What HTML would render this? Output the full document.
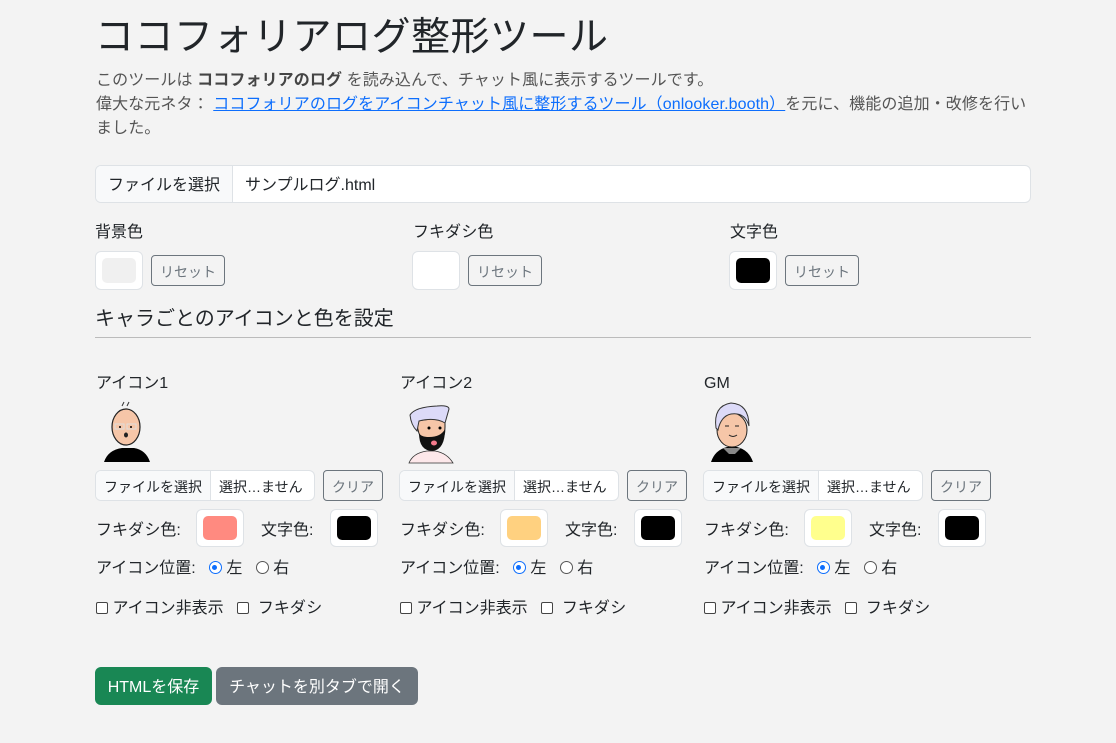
<!DOCTYPE html>
<html><head><meta charset="utf-8"><style>
*{box-sizing:border-box;margin:0;padding:0}
body{width:1116px;height:743px;background:#f3f3f3;font-family:"Liberation Sans","Noto Sans CJK JP",sans-serif;color:#212529;position:relative;overflow:hidden;font-size:16px;line-height:24px}
.a{position:absolute;white-space:nowrap}
h1{position:absolute;left:95px;top:10px;font-size:39px;font-weight:400;line-height:56px;letter-spacing:0.5px}
.p{position:absolute;left:96px;font-size:16px;color:#555;line-height:24px;letter-spacing:0.1px}
.p b{color:#444}
.p a{color:#0d6efd;text-decoration:underline}
.fi{position:absolute;border:1px solid #dee2e6;border-radius:6px;background:#fff;display:flex;font-size:16px;overflow:hidden}
.fi span.b{background:#f8f9fa;border-right:1px solid #dee2e6;display:flex;align-items:center;padding:3px 12px 0}
.fi span.t{display:flex;align-items:center;padding:3px 12px 0}
.cb{position:absolute;border:1px solid #dee2e6;border-radius:6px;background:#fff;padding:6px}
.cb div{width:100%;height:100%;border-radius:5px}
.btn{position:absolute;border:1px solid #6c757d;border-radius:4px;color:#6c757d;font-size:14px;display:flex;align-items:center;justify-content:center;padding-top:2px}
.rad{display:inline-block;width:13px;height:13px;border-radius:50%;border:1px solid #555;vertical-align:-1px;background:#fff}
.rad.on{border:1.5px solid #0d6efd;position:relative}
.rad.on:after{content:"";position:absolute;left:2.5px;top:2.5px;width:5px;height:5px;border-radius:50%;background:#0d6efd}
.chk{display:inline-block;width:12px;height:12px;border:1px solid #444;border-radius:2px;background:#fff;vertical-align:-1px}
.sb{position:absolute;top:667px;height:38px;border-radius:6px;color:#fff;font-size:16px;display:flex;align-items:center;justify-content:center;padding-top:3px}
</style></head><body>
<h1>ココフォリアログ整形ツール</h1>
<div class="p" style="top:69px">このツールは <b>ココフォリアのログ</b> を読み込んで、チャット風に表示するツールです。</div>
<div class="p" style="top:93px">偉大な元ネタ： <a>ココフォリアのログをアイコンチャット風に整形するツール（onlooker.booth）</a>を元に、機能の追加・改修を行い</div>
<div class="p" style="top:117px">ました。</div>

<div class="fi" style="left:95px;top:165px;width:936px;height:38px"><span class="b">ファイルを選択</span><span class="t">サンプルログ.html</span></div>

<div class="a" style="left:95px;top:221px">背景色</div>
<div class="cb" style="left:95px;top:251px;width:48px;height:39px"><div style="background:#f0f0f0"></div></div>
<div class="btn" style="left:151px;top:255px;width:74px;height:31px">リセット</div>
<div class="a" style="left:413px;top:221px">フキダシ色</div>
<div class="cb" style="left:412px;top:251px;width:48px;height:39px"><div style="background:#fff"></div></div>
<div class="btn" style="left:468px;top:255px;width:74px;height:31px">リセット</div>
<div class="a" style="left:730px;top:221px">文字色</div>
<div class="cb" style="left:729px;top:251px;width:48px;height:39px"><div style="background:#000"></div></div>
<div class="btn" style="left:785px;top:255px;width:74px;height:31px">リセット</div>

<div class="a" style="left:95px;top:306px;font-size:20px;line-height:26px">キャラごとのアイコンと色を設定</div>
<div class="a" style="left:95px;top:337px;width:936px;height:1px;background:#bbb"></div>

<div class="a" style="left:96px;top:372px">アイコン1</div>
<div class="a" style="left:400px;top:372px">アイコン2</div>
<div class="a" style="left:704px;top:372px">GM</div>

<svg class="a" style="left:100px;top:400px" width="52" height="64" viewBox="0 0 52 64">
<path d="M4 62 Q8 50 22 48 L34 48 Q46 50 50 62 Z" fill="#000"/>
<ellipse cx="26" cy="27" rx="14" ry="18" fill="#f6c6a8" stroke="#222" stroke-width="1.2"/>
<path d="M22 6 l2 -4 M27 6 l2 -4" stroke="#333"/>
<rect x="15" y="24" width="9" height="5" fill="none" stroke="#ddd"/><rect x="27" y="24" width="9" height="5" fill="none" stroke="#ddd"/>
<circle cx="20" cy="27" r="1" fill="#000"/><circle cx="31" cy="27" r="1" fill="#000"/>
<ellipse cx="26" cy="35" rx="2" ry="2.5" fill="#222"/>
</svg>
<svg class="a" style="left:405px;top:403px" width="50" height="62" viewBox="0 0 50 62">
<path d="M4 60 Q8 50 22 48 L30 48 Q42 50 48 60 Z" fill="#fde8ea" stroke="#333" stroke-width=".8"/>
<path d="M12 18 Q12 34 24 46 Q40 44 40 24 L40 14 Z" fill="#f6c6a8" stroke="#222"/>
<path d="M14 30 Q14 48 28 48 Q40 46 40 26 Q36 34 24 34 Q16 34 14 30Z" fill="#111"/>
<ellipse cx="29" cy="40" rx="3" ry="2.5" fill="#f47a8c"/>
<path d="M5 12 Q10 4 32 3 Q44 2 44 6 L40 20 Q30 14 14 18 L12 28 Q6 22 5 12Z" fill="#dcdaf8" stroke="#333"/>
<circle cx="24" cy="25" r="1.5" fill="#000"/><circle cx="35" cy="25" r="1.5" fill="#000"/>
</svg>
<svg class="a" style="left:709px;top:400px" width="46" height="64" viewBox="0 0 46 64">
<path d="M2 62 Q6 50 18 47 L28 47 Q40 50 44 62 Z" fill="#000"/>
<path d="M14 48 L20 54 L26 54 L32 48" fill="#888"/>
<ellipse cx="23" cy="30" rx="15" ry="17" fill="#f6c6a8" stroke="#222"/>
<path d="M7 28 Q4 6 22 3 Q40 4 40 26 Q36 12 22 14 Q12 16 9 30Z" fill="#dcdaf8" stroke="#333"/>
<path d="M16 26 l4 0 M26 26 l4 0" stroke="#222"/>
<path d="M20 35 Q24 38 28 35" stroke="#222" fill="none"/>
</svg>

<div class="fi" style="left:95px;top:470px;width:220px;height:31px;font-size:14px"><span class="b" style="padding:2px 8px 0">ファイルを選択</span><span class="t" style="padding:2px 8px 0">選択…ません</span></div>
<div class="btn" style="left:323px;top:470px;width:60px;height:31px">クリア</div>
<div class="fi" style="left:399px;top:470px;width:220px;height:31px;font-size:14px"><span class="b" style="padding:2px 8px 0">ファイルを選択</span><span class="t" style="padding:2px 8px 0">選択…ません</span></div>
<div class="btn" style="left:627px;top:470px;width:60px;height:31px">クリア</div>
<div class="fi" style="left:703px;top:470px;width:220px;height:31px;font-size:14px"><span class="b" style="padding:2px 8px 0">ファイルを選択</span><span class="t" style="padding:2px 8px 0">選択…ません</span></div>
<div class="btn" style="left:931px;top:470px;width:60px;height:31px">クリア</div>

<div class="a" style="left:96px;top:519px">フキダシ色:</div>
<div class="cb" style="left:196px;top:509px;width:48px;height:38px"><div style="background:#ff8a80"></div></div>
<div class="a" style="left:261px;top:519px">文字色:</div>
<div class="cb" style="left:330px;top:509px;width:48px;height:38px"><div style="background:#000"></div></div>
<div class="a" style="left:400px;top:519px">フキダシ色:</div>
<div class="cb" style="left:500px;top:509px;width:48px;height:38px"><div style="background:#ffd180"></div></div>
<div class="a" style="left:565px;top:519px">文字色:</div>
<div class="cb" style="left:634px;top:509px;width:48px;height:38px"><div style="background:#000"></div></div>
<div class="a" style="left:704px;top:519px">フキダシ色:</div>
<div class="cb" style="left:804px;top:509px;width:48px;height:38px"><div style="background:#ffff8d"></div></div>
<div class="a" style="left:869px;top:519px">文字色:</div>
<div class="cb" style="left:938px;top:509px;width:48px;height:38px"><div style="background:#000"></div></div>

<div class="a" style="left:96px;top:557px">アイコン位置: &nbsp;&nbsp;<span class="rad on"></span> 左 &nbsp;&nbsp;<span class="rad"></span> 右</div>
<div class="a" style="left:400px;top:557px">アイコン位置: &nbsp;&nbsp;<span class="rad on"></span> 左 &nbsp;&nbsp;<span class="rad"></span> 右</div>
<div class="a" style="left:704px;top:557px">アイコン位置: &nbsp;&nbsp;<span class="rad on"></span> 左 &nbsp;&nbsp;<span class="rad"></span> 右</div>

<div class="a" style="left:96px;top:597px"><span class="chk"></span> アイコン非表示 &nbsp;&nbsp;<span class="chk"></span> &nbsp;フキダシ</div>
<div class="a" style="left:400px;top:597px"><span class="chk"></span> アイコン非表示 &nbsp;&nbsp;<span class="chk"></span> &nbsp;フキダシ</div>
<div class="a" style="left:704px;top:597px"><span class="chk"></span> アイコン非表示 &nbsp;&nbsp;<span class="chk"></span> &nbsp;フキダシ</div>

<div class="sb" style="left:95px;width:117px;background:#198754">HTMLを保存</div>
<div class="sb" style="left:216px;width:202px;background:#6c757d">チャットを別タブで開く</div>
</body></html>
